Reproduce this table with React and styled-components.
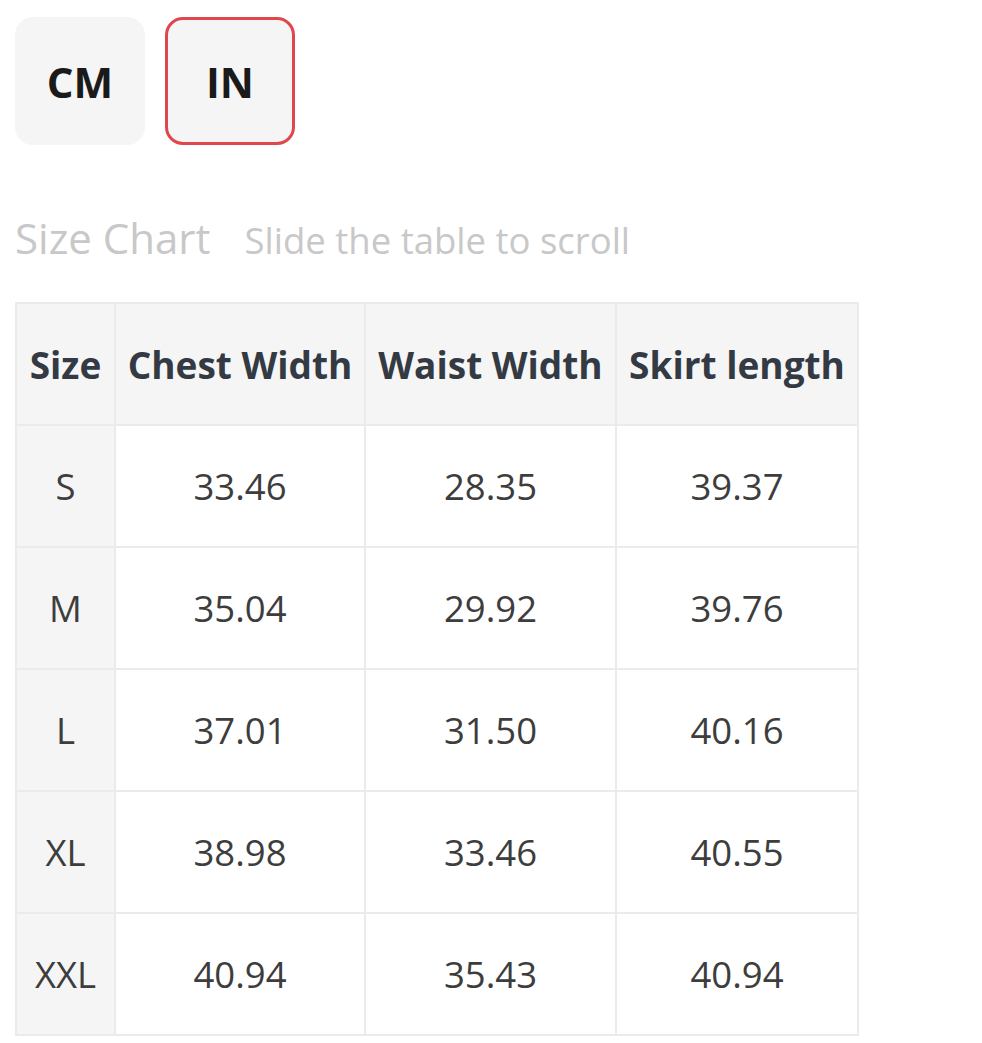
import React, { useState } from "react";
import styled, { createGlobalStyle } from "styled-components";

const GlobalStyle = createGlobalStyle`
  body {
    margin: 0;
    background: #fff;
    font-family: "Open Sans", "Noto Sans", Arial, sans-serif;
  }
`;

const Page = styled.div`
  padding: 17px 0 0 15px;
`;

const UnitRow = styled.div`
  display: flex;
  gap: 20px;
`;

const UnitButton = styled.button`
  width: 130px;
  height: 128px;
  box-sizing: border-box;
  border-radius: 18px;
  background: #f5f5f5;
  border: 3px solid ${(p) => (p.active ? "#e0474d" : "transparent")};
  font-family: "Open Sans", Arial, sans-serif;
  font-weight: 700;
  font-size: 42px;
  color: #1a1a1a;
  cursor: pointer;
  padding: 0;
`;

const TitleRow = styled.div`
  display: flex;
  align-items: baseline;
  gap: 34px;
  margin-top: 66px;
  color: #c8c8c8;
`;

const Title = styled.span`
  font-size: 42px;
  line-height: 54px;
`;

const Hint = styled.span`
  font-size: 36.5px;
`;

const Table = styled.table`
  margin-top: 37px;
  border-collapse: collapse;
  font-family: "Open Sans", Arial, sans-serif;
  font-size: 36.5px;
  color: #3d3d3d;
`;

const HeadCell = styled.th`
  background: #f5f5f5;
  border: 2px solid #ebebeb;
  height: 122px;
  width: ${(p) => p.w}px;
  box-sizing: border-box;
  padding: 0;
  font-size: 37px;
  font-weight: 700;
  color: #333a44;
  text-align: center;
  white-space: nowrap;
`;

const Cell = styled.td`
  background: ${(p) => (p.first ? "#f5f5f5" : "#fff")};
  border: 2px solid #ebebeb;
  height: 122px;
  box-sizing: border-box;
  padding: 0;
  text-align: center;
`;

const columns = [
  { label: "Size", w: 99 },
  { label: "Chest Width", w: 250 },
  { label: "Waist Width", w: 251 },
  { label: "Skirt length", w: 242 },
];

const rows = [
  ["S", "33.46", "28.35", "39.37"],
  ["M", "35.04", "29.92", "39.76"],
  ["L", "37.01", "31.50", "40.16"],
  ["XL", "38.98", "33.46", "40.55"],
  ["XXL", "40.94", "35.43", "40.94"],
];

export default function App() {
  const [unit, setUnit] = useState("IN");

  return (
    <Page>
      <GlobalStyle />
      <UnitRow>
        <UnitButton active={unit === "CM"} onClick={() => setUnit("CM")}>
          CM
        </UnitButton>
        <UnitButton active={unit === "IN"} onClick={() => setUnit("IN")}>
          IN
        </UnitButton>
      </UnitRow>
      <TitleRow>
        <Title>Size Chart</Title>
        <Hint>Slide the table to scroll</Hint>
      </TitleRow>
      <Table>
        <thead>
          <tr>
            {columns.map((c) => (
              <HeadCell key={c.label} w={c.w}>
                {c.label}
              </HeadCell>
            ))}
          </tr>
        </thead>
        <tbody>
          {rows.map((r) => (
            <tr key={r[0]}>
              {r.map((v, i) => (
                <Cell key={i} first={i === 0}>
                  {v}
                </Cell>
              ))}
            </tr>
          ))}
        </tbody>
      </Table>
    </Page>
  );
}
